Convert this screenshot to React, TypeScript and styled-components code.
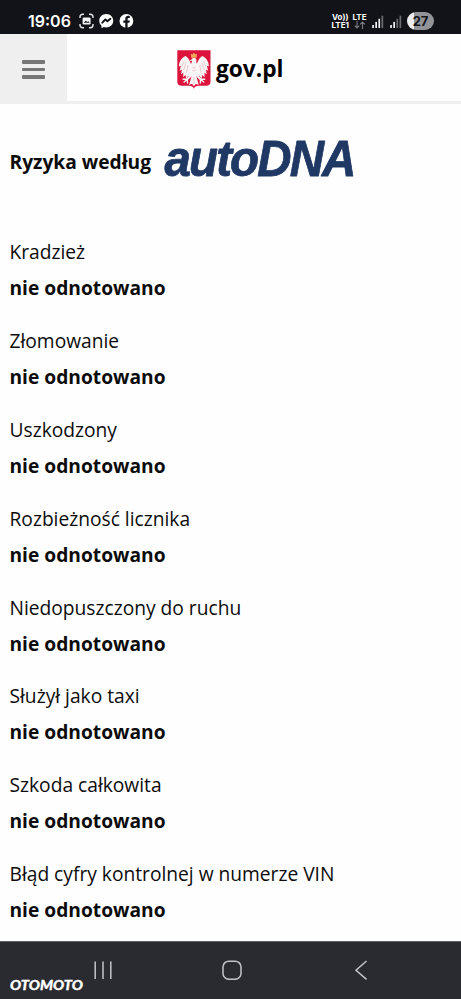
import styled, { createGlobalStyle } from 'styled-components'

const risks = [
  'Kradzież',
  'Złomowanie',
  'Uszkodzony',
  'Rozbieżność licznika',
  'Niedopuszczony do ruchu',
  'Służył jako taxi',
  'Szkoda całkowita',
  'Błąd cyfry kontrolnej w numerze VIN',
]

const StatusIcons = () => (
  <svg width="58" height="18" viewBox="0 0 58 18" fill="none">
    <g stroke="#e4e4e8" strokeWidth="1.4">
      <path d="M1 6V5q0-2.8 2.8-2.8H5M10 2.2h1.200q2.800 0 2.800 2.800v1M14 12v1q0 2.800-2.800 2.800H10M5 15.800H3.800Q1 15.800 1 13v-1" />
    </g>
    <rect x="3.600" y="5.500" width="8" height="7" rx="1.300" fill="#f4f4f5" />
    <path d="M4.800 10.800l2-2 1.500 1.300 1-.9 1.400 1.600z" fill="#121318" />
    <path
      fill="#fff"
      d="M27.300 2c-4.100 0-7 2.900-7 6.700 0 2 .8 3.800 2.200 5v2.500l2.300-1.200c.8.200 1.600.400 2.500.400 4 0 6.900-2.900 6.900-6.700S31.300 2 27.300 2z"
    />
    <path d="M23.300 10.700l3-3.200 2.100 1.800 3-2.500" stroke="#121318" strokeWidth="1.900" strokeLinejoin="round" strokeLinecap="round" />
    <circle cx="47.400" cy="8.900" r="6.900" fill="#fff" />
    <path
      fill="#121318"
      d="M46.300 16v-5.300h-2V8.500h2V7.100c0-2.200 1.100-3.300 3-3.300.6 0 1.200.1 1.500.2v1.900h-1c-.9 0-1.200.4-1.200 1.200v1.400h2.200l-.4 2.200h-1.800V16z"
    />
  </svg>
)

const SignalBars = ({ lit }: { lit: number }) => (
  <svg width="12" height="13" viewBox="0 0 12 13">
    {[0, 1, 2, 3].map(i => (
      <rect
        key={i}
        x={i * 3.1 + 0.2}
        y={10 - i * 3.1}
        width="1.700"
        height={3 + i * 3.1}
        fill={i < lit ? '#f2f2f4' : '#6c6d73'}
      />
    ))}
  </svg>
)

const Emblem = () => (
  <svg width="34" height="40" viewBox="0 0 34 40">
    <path fill="#dc143c" d="M.3.300h33.200v31.200c0 3-1.500 4.300-4.500 4.300h-7.500c-2.300 0-3.700.9-4.600 2.900-.9-2-2.300-2.900-4.600-2.900H4.800c-3 0-4.500-1.300-4.500-4.300z" />
    <g fill="#faf6f5">
      <path d="M15 15.200C12.800 12.800 12.500 8.200 8.600 6 4.400 7.800 2 11.800 1.900 16.400l2-.6-1.300 4.900 2.300-1.300-.9 5 2.300-1.900-.1 4.800 2.300-2.400.7 4 2-3.200 1.700 2.300 2.100-4.300z" />
      <path d="M18.800 15.200c2.200-2.400 2.500-7 6.400-9.200 4.200 1.800 6.600 5.800 6.700 10.400l-2-.6 1.300 4.900-2.300-1.300.9 5-2.300-1.900.1 4.800-2.300-2.400-.7 4-2-3.200-1.700 2.300-2.100-4.300z" />
      <path d="M14.700 9.200c.5-1.700 4-1.800 4.600.1.500 1.400-.4 2.300.3 3.900 2.400 3.900 1.900 9.200-.2 12.700h-5c-2.500-4-2.500-9.200.1-12.900.4-1 .7-1.700.1-2.300l-2.100.3z" />
      <path d="M15 24.200L12.100 35l2.900-1.300 1.900 2.500 1.900-2.500 2.900 1.300-2.900-10.800z" />
    </g>
    <g fill="none" stroke="#faf6f5" strokeWidth="2" strokeLinecap="round">
      <path d="M14.300 25l-4 4.200M19.500 25l4 4.200" />
      <path strokeWidth="1.400" d="M10.300 29.200l-4.200 0M10.300 29.200l-3.200 2.900M10.300 29.200l.2 3.800M23.500 29.200l4.200 0M23.500 29.200l3.200 2.900M23.500 29.200l-.2 3.800" />
    </g>
    <g fill="none" stroke="#dfaab2" strokeWidth=".6">
      <path d="M7.300 11l-2.400 5.500M9 12.500L6.700 20M11 15l-1.500 8M26.500 11l2.400 5.500M24.800 12.500l2.300 7.500M22.800 15l1.500 8M15.300 17l1.600 1 1.600-1M15.300 20l1.600 1 1.600-1M16.900 27v7" />
    </g>
    <path fill="#f1a95c" d="M14.300 7.700l-.6-4 1.800.9L16.900 2.500l1.400 2.100 1.800-.9-.6 4z" />
  </svg>
)

const AutoDnaLogo = () => (
  <svg width="210" height="64" viewBox="0 0 210 64">
    <LogoText x="1.500" y="40" textLength="190" lengthAdjust="spacingAndGlyphs">
      autoDNA
    </LogoText>
  </svg>
)

const App = () => (
  <>
    <GlobalStyle />
    <Screen>
      <StatusBar>
        <Clock>19:06</Clock>
        <StatusIcons />
        <Network>
          <NetworkLabel>
            <span>Vo))</span>
            <span>LTE1</span>
          </NetworkLabel>
          <NetworkLabel>
            <span>LTE</span>
            <svg width="12" height="8" viewBox="0 0 12 8" fill="none" stroke="#7b7c82" strokeWidth="1.100">
              <path d="M3 0v7M.7 4.700L3 7l2.300-2.300M8.500 8V1M6.200 3.300L8.500 1l2.300 2.300" />
            </svg>
          </NetworkLabel>
          <SignalBars lit={3} />
          <SignalBars lit={2} />
          <Battery>27</Battery>
        </Network>
      </StatusBar>
      <Header>
        <MenuButton aria-label="Menu">
          <MenuLine />
          <MenuLine />
          <MenuLine />
        </MenuButton>
        <Brand>
          <Emblem />
          <BrandName>gov.pl</BrandName>
        </Brand>
      </Header>
      <Content>
        <Heading>
          <HeadingText>Ryzyka według</HeadingText>
          <AutoDnaLogo />
        </Heading>
        <RiskList>
          {risks.map(risk => (
            <div key={risk}>
              <Label>{risk}</Label>
              <Value>nie odnotowano</Value>
            </div>
          ))}
        </RiskList>
      </Content>
      <NavBar>
        <Watermark width="78" height="18" viewBox="0 0 78 18">
          <WatermarkText x="1" y="13.500" textLength="73" lengthAdjust="spacingAndGlyphs">
            OTOMOTO
          </WatermarkText>
        </Watermark>
        <NavIcon>
          <path d="M2.200 1.500v17.500M10 1.500v17.500M17.800 1.500v17.500" />
        </NavIcon>
        <NavIcon>
          <rect x="1" y="1.200" width="18" height="18" rx="5.800" />
        </NavIcon>
        <NavIcon>
          <path d="M15.500 1L5 10.200l10.500 9.200" />
        </NavIcon>
      </NavBar>
    </Screen>
  </>
)

const GlobalStyle = createGlobalStyle`
  body {
    background: #fefefe;
    margin: 0;
  }
`

const Screen = styled.div`
  color: #0c0c0c;
  display: flex;
  flex-direction: column;
  font-family: 'Open Sans', sans-serif;
  height: 999px;
  overflow: hidden;
  width: 461px;
`

const StatusBar = styled.div`
  align-items: center;
  background: #121318;
  box-sizing: border-box;
  color: #ffffff;
  display: flex;
  flex: none;
  height: 34px;
  padding: 8px 27px 0 28px;
`

const Clock = styled.span`
  font-family: Inter, sans-serif;
  font-size: 16px;
  font-weight: 600;
  margin-right: 8px;
  width: 43px;
`

const Network = styled.div`
  align-items: center;
  display: flex;
  gap: 5.5px;
  margin-left: auto;
`

const NetworkLabel = styled.div`
  align-items: center;
  display: flex;
  flex-direction: column;
  font-family: Inter, sans-serif;
  font-size: 8px;
  font-weight: 700;
  line-height: 8px;

  & + & {
    margin-left: -2px;
  }
`

const Battery = styled.span`
  background: linear-gradient(90deg, #ededee 27%, #929397 27%);
  border-radius: 9px;
  color: #121318;
  font-family: Inter, sans-serif;
  font-size: 13px;
  font-weight: 700;
  line-height: 18px;
  text-align: center;
  width: 27px;
`

const Header = styled.header`
  border-bottom: 3px solid #efefef;
  display: flex;
  flex: none;
  height: 67px;
`

const MenuButton = styled.button`
  align-items: center;
  background: #efefef;
  border: none;
  display: flex;
  flex-direction: column;
  gap: 4px;
  justify-content: center;
  margin-bottom: -3px;
  padding: 1px 0 0;
  width: 67px;
`

const MenuLine = styled.span`
  background: #777777;
  border-radius: 1px;
  height: 3.6px;
  width: 23px;
`

const Brand = styled.div`
  align-items: center;
  display: flex;
  gap: 5.5px;
  padding: 5px 0 0 109.5px;
`

const BrandName = styled.span`
  color: #000000;
  font-size: 22.7px;
  font-weight: 700;
  line-height: 30px;
  padding-bottom: 2px;
`

const Content = styled.main`
  flex: 1;
  padding: 32px 9.5px 0;
`

const Heading = styled.div`
  align-items: flex-start;
  display: flex;
  height: 98px;
`

const HeadingText = styled.span`
  font-size: 19.2px;
  font-weight: 700;
  line-height: 52px;
  white-space: nowrap;
  width: 153px;
`

const LogoText = styled.text`
  fill: #1f3864;
  font-family: 'Liberation Sans', sans-serif;
  font-size: 50px;
  font-style: italic;
  font-weight: 700;
  letter-spacing: -2px;
  stroke: #1f3864;
  stroke-linejoin: round;
  stroke-width: 0.8;
`

const RiskList = styled.div`
  display: grid;
  row-gap: 16.9px;
`

const Label = styled.div`
  font-size: 19.2px;
  line-height: 36px;
`

const Value = styled(Label)`
  font-weight: 700;
`

const NavBar = styled.nav`
  align-items: center;
  background: #2a2b30;
  border-top: 1px solid #606166;
  box-sizing: border-box;
  display: flex;
  flex: none;
  gap: 109px;
  height: 58px;
  justify-content: center;
  padding-left: 2px;
  position: relative;
`

const NavIcon = styled.svg.attrs({ viewBox: '0 0 20 20.500' })`
  fill: none;
  height: 20.5px;
  stroke: #c4c5ca;
  stroke-width: 1.5;
  width: 20px;
`

const Watermark = styled.svg`
  bottom: 5px;
  left: 9px;
  position: absolute;
`

const WatermarkText = styled.text`
  fill: #ffffff;
  font-family: Lato, sans-serif;
  font-size: 13px;
  font-style: italic;
  font-weight: 900;
  stroke: #ffffff;
  stroke-width: 0.3;
`

export default App
